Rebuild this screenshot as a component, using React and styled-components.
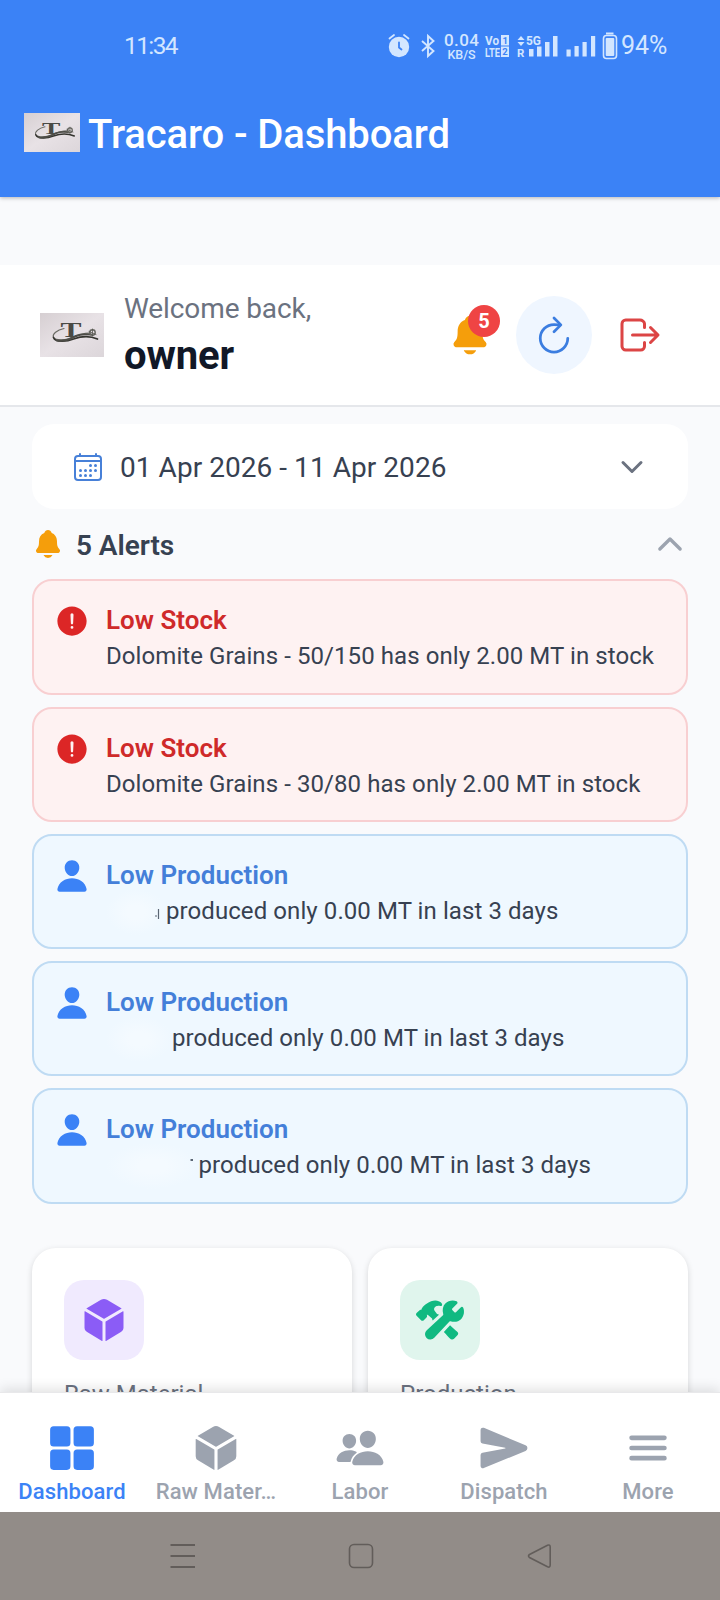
import React from "react";
import styled, { createGlobalStyle } from "styled-components";
import {
  IoAlertCircle,
  IoCalendarOutline,
  IoChevronDown,
  IoChevronUp,
  IoConstruct,
  IoCube,
  IoGrid,
  IoLogOutOutline,
  IoMenu,
  IoNotifications,
  IoPeople,
  IoPerson,
  IoRefreshOutline,
  IoSend,
} from "react-icons/io5";

const GlobalStyle = createGlobalStyle`
  * {
    box-sizing: border-box;
  }

  body {
    margin: 0;
    background: #f9fafb;
    font-family: Roboto, "Liberation Sans", sans-serif;
  }

  svg {
    display: block;
    flex-shrink: 0;
    overflow: visible;
  }
`;

const Screen = styled.div`
  width: 720px;
  height: 1600px;
  display: flex;
  flex-direction: column;
  overflow: hidden;
  background: #f9fafc;
`;

const TopBar = styled.header`
  position: relative;
  z-index: 1;
  height: 197px;
  flex-shrink: 0;
  background: #3b82f6;
  box-shadow: 0 1px 4px rgba(0, 0, 0, 0.28);
`;

const StatusBar = styled.div`
  height: 91px;
  padding: 0 51px 0 124px;
  display: flex;
  align-items: center;
  color: #d3e6ff;
`;

const Clock = styled.span`
  flex: 1;
  font-size: 24.5px;
  letter-spacing: -1.6px;
`;

const StatusItem = styled.div`
  width: ${(p) => p.$width}px;
  margin-left: ${(p) => p.$gap}px;
`;

const Battery = styled.span`
  width: 48px;
  margin-left: 3px;
  font-size: 25px;
`;

const TitleRow = styled.div`
  height: 82px;
  padding-left: 24px;
  display: flex;
  align-items: center;
  gap: 8px;
`;

const Title = styled.h1`
  margin: 0;
  padding-top: 5px;
  font-size: 40px;
  font-weight: 500;
  line-height: 48px;
  letter-spacing: -0.1px;
  color: #fff;
`;

const Content = styled.main`
  flex: 1;
  min-height: 0;
  overflow: hidden;
  padding-top: 68px;
`;

const Welcome = styled.section`
  height: 142px;
  padding: 0 56px 0 40px;
  display: flex;
  align-items: center;
  background: #fff;
  border-bottom: 2px solid #e5e7eb;
`;

const Greeting = styled.div`
  flex: 1;
  margin-left: 20px;
  padding-top: 4px;
`;

const Hello = styled.div`
  font-size: 28px;
  line-height: 38px;
  letter-spacing: -0.1px;
  color: #6b7280;
`;

const UserName = styled.div`
  font-size: 40px;
  font-weight: 700;
  line-height: 56px;
  letter-spacing: -0.1px;
  color: #111827;
`;

const Actions = styled.div`
  display: flex;
  align-items: center;
  color: #f59e0b;
`;

const BellButton = styled.div`
  position: relative;
  margin-right: 24px;
`;

const Badge = styled.span`
  position: absolute;
  top: -8px;
  right: -8px;
  width: 32px;
  height: 32px;
  border-radius: 50%;
  background: #ef4444;
  color: #fff;
  font-size: 20px;
  font-weight: 700;
  line-height: 33px;
  text-align: center;
`;

const RefreshButton = styled.div`
  width: 76px;
  height: 78px;
  margin-right: 24px;
  border-radius: 50%;
  display: flex;
  align-items: center;
  justify-content: center;
  background: #eff6ff;
  color: #3b7de0;
`;

const LogoutButton = styled.div`
  color: #dc4545;
`;

const DatePicker = styled.section`
  height: 85px;
  margin: 17px 32px 0;
  padding: 0 40px;
  display: flex;
  align-items: center;
  border-radius: 22px;
  background: #fff;
  color: #4780d8;
`;

const DateRange = styled.span`
  flex: 1;
  margin-left: 16px;
  padding-top: 2px;
  font-size: 28px;
  letter-spacing: 0.05px;
  color: #374151;
`;

const Chevron = styled.span`
  color: ${(p) => p.$color};
`;

const AlertsHeader = styled.div`
  height: 70.3px;
  padding: 0 32px;
  display: flex;
  align-items: center;
  color: #f59e0b;
`;

const AlertsTitle = styled.h2`
  flex: 1;
  margin: 0 0 0 12px;
  padding-top: 2px;
  font-size: 28px;
  font-weight: 600;
  letter-spacing: -0.05px;
  color: #374151;
`;

const AlertList = styled.div`
  padding: 0 32px;
  display: flex;
  flex-direction: column;
  gap: 12px;
`;

const AlertCard = styled.article`
  height: 115.3px;
  padding: 22px 20px;
  display: flex;
  gap: 16px;
  border: 2px solid ${(p) => (p.$danger ? "#f8cfd1" : "#bfdbf3")};
  border-radius: 20px;
  background: ${(p) => (p.$danger ? "#fef2f2" : "#eff8ff")};
  color: ${(p) => (p.$danger ? "#dc2626" : "#3b82f6")};
`;

const AlertTitle = styled.div`
  font-size: 26px;
  font-weight: 600;
  line-height: 35px;
  color: ${(p) => (p.$danger ? "#cf2a2a" : "#447fd9")};
`;

const AlertText = styled.div`
  display: flex;
  font-size: 24px;
  line-height: 36px;
  letter-spacing: 0.08px;
  white-space: nowrap;
  color: #374151;
`;

const HiddenName = styled.span`
  width: ${(p) => p.$width}px;
  height: 46px;
  margin: -4px 0 -6px;
  background: radial-gradient(closest-side, #f4faff 30%, #eff8ff);
`;

const StatGrid = styled.div`
  padding: 44px 32px 0;
  display: grid;
  grid-template-columns: 1fr 1fr;
  gap: 16px;
`;

const StatCard = styled.div`
  height: 260px;
  padding: 32px;
  border-radius: 24px;
  background: #fff;
  box-shadow: 0 2px 6px rgba(0, 0, 0, 0.15);
`;

const StatIcon = styled.div`
  width: 80px;
  height: 80px;
  border-radius: 20px;
  display: flex;
  align-items: center;
  justify-content: center;
  background: ${(p) => p.$bg};
  color: ${(p) => p.$color};
`;

const StatLabel = styled.div`
  margin-top: 17px;
  font-size: 24px;
  line-height: 34px;
  color: #6b7280;
`;

const TabBar = styled.nav`
  position: relative;
  z-index: 1;
  height: 120px;
  padding-top: 30px;
  flex-shrink: 0;
  display: grid;
  grid-template-columns: repeat(5, 1fr);
  background: #fff;
  border-top: 1px solid #e8e8ea;
  box-shadow: 0 -3px 12px rgba(0, 0, 0, 0.12);
`;

const Tab = styled.div`
  display: flex;
  flex-direction: column;
  align-items: center;
  gap: 6px;
  font-size: 22px;
  font-weight: 500;
  line-height: 26px;
  letter-spacing: 0.1px;
  color: ${(p) => (p.$active ? "#3b82f6" : "#9ca3af")};
`;

const SystemNav = styled.footer`
  position: relative;
  z-index: 1;
  height: 88px;
  padding: 0 168px 0 170px;
  flex-shrink: 0;
  display: flex;
  align-items: center;
  justify-content: space-between;
  background: #928c88;
`;

const Logo = ({ width, height }) => (
  <svg width={width} height={height} viewBox="0 0 64 44" preserveAspectRatio="none">
    <defs>
      <linearGradient id="paper" x1="0" y1="0" x2="1" y2="1">
        <stop offset="0" stopColor="#d6cfd2" />
        <stop offset="0.5" stopColor="#e8e2e6" />
        <stop offset="1" stopColor="#dcd6da" />
      </linearGradient>
    </defs>
    <rect width="64" height="44" fill="url(#paper)" />
    <g fill="none" strokeLinecap="round">
      <path d="M24 15.500C17 17 12 21 13.500 24.500c2 3 12 3 19 0 6-3 10-4.500 17-4.500" stroke="#6a6a64" strokeWidth="1.2" />
      <path d="M13.500 24.500c2 5.500 14 4 20 1.500 8-3 15-4 24 0" stroke="#34342f" strokeWidth="1.7" />
      <path d="M17 27.500c8 1 13-1.500 19-4.500 5-2.500 10-2 15-1.500" stroke="#4d4d47" strokeWidth="2" />
      <circle cx="52.500" cy="19.500" r="2.700" stroke="#65655f" strokeWidth="1.4" />
      <path d="M49 18.500l7 3M52.500 16v7" stroke="#55554f" strokeWidth="0.8" />
    </g>
    <text
      x="31"
      y="24"
      textAnchor="middle"
      textLength="21"
      lengthAdjust="spacingAndGlyphs"
      fontFamily="Liberation Serif, serif"
      fontWeight="700"
      fontSize="20"
      fill="#4a4a45"
    >
      T
    </text>
  </svg>
);

const statusFont = { fontFamily: "Roboto, sans-serif", fontWeight: 500 };

const AlarmIcon = () => (
  <svg width="22" height="26" viewBox="0 0 22 26" fill="none" stroke="currentColor" strokeLinecap="round">
    <circle cx="11" cy="14" r="10.2" fill="currentColor" stroke="none" />
    <path d="M1.5 5.5L6 2M20.5 5.5L16 2" strokeWidth="1.8" />
    <path d="M11 9.500v5l2.500 2" stroke="#3b82f6" strokeWidth="1.8" />
  </svg>
);

const BluetoothIcon = () => (
  <svg width="14" height="24" viewBox="0 0 14 24" fill="none" stroke="currentColor" strokeWidth="1.9">
    <path d="M1 7l11.500 10L7 22V2l5.500 5L1 17" />
  </svg>
);

const SpeedIcon = () => (
  <svg width="35" height="28" viewBox="0 0 35 28" fill="currentColor" style={statusFont}>
    <text x="0" y="14" fontSize="17" textLength="35">0.04</text>
    <text x="3.500" y="26.500" fontSize="12.500" textLength="28">KB/S</text>
  </svg>
);

const VolteIcon = () => (
  <svg width="24" height="24" viewBox="0 0 24 24" fill="currentColor" fontWeight="700">
    <text x="0" y="11" fontSize="13" textLength="14" lengthAdjust="spacingAndGlyphs">Vo</text>
    <text x="0" y="22.500" fontSize="13" textLength="15" lengthAdjust="spacingAndGlyphs">LTE</text>
    <rect x="16" y="1" width="8" height="10.500" />
    <rect x="16" y="12.500" width="8" height="10.500" />
    <g fill="#3b82f6" fontSize="9.500">
      <text x="17.500" y="9.800">1</text>
      <text x="17.200" y="21.400">2</text>
    </g>
  </svg>
);

const FiveGIcon = () => (
  <svg width="41" height="24" viewBox="0 0 41 24" fill="currentColor" fontWeight="700">
    <path d="M0.500 6L4 2l3.500 4zM0.500 8L4 12l3.500-4z" />
    <text x="0" y="23" fontSize="11.500">R</text>
    <text x="9" y="10.500" fontSize="13" textLength="15" lengthAdjust="spacingAndGlyphs">5G</text>
    <rect x="12" y="15" width="4.500" height="7.500" />
    <rect x="20" y="12.500" width="4.500" height="10" />
    <rect x="28" y="8" width="4.500" height="14.500" />
    <rect x="36" y="2" width="4.500" height="20.500" />
  </svg>
);

const SignalIcon = () => (
  <svg width="30" height="24" viewBox="0 0 30 24" fill="currentColor">
    <rect x="0.500" y="15.500" width="4.200" height="7" />
    <rect x="8.500" y="12" width="4.200" height="10.500" />
    <rect x="16.500" y="8" width="4.200" height="14.500" />
    <rect x="25" y="2" width="4.200" height="20.500" />
  </svg>
);

const BatteryIcon = () => (
  <svg width="16" height="28" viewBox="0 0 16 28" fill="currentColor">
    <rect x="4" y="0.500" width="7.500" height="2" />
    <rect x="1.500" y="3.500" width="13" height="23" rx="3" fill="none" stroke="currentColor" strokeWidth="1.600" />
    <rect x="3.700" y="6" width="8.600" height="18" rx="1" />
  </svg>
);

// leftover specks beside the masked names
const Speck = ({ kind }) => (
  <svg width="100%" height="46" viewBox="0 0 60 46" preserveAspectRatio="xMaxYMin meet">
    {kind === "stroke" && <path d="M52.500 20v10M49 27h2" stroke="#5b6674" strokeWidth="1.200" />}
    {kind === "dot" && <rect x="52" y="16" width="2.500" height="2" fill="#5b6674" />}
  </svg>
);

const alerts = [
  { danger: true, title: "Low Stock", text: "Dolomite Grains - 50/150 has only 2.00 MT in stock" },
  { danger: true, title: "Low Stock", text: "Dolomite Grains - 30/80 has only 2.00 MT in stock" },
  { title: "Low Production", text: "produced only 0.00 MT in last 3 days", nameWidth: 60, speck: "stroke" },
  { title: "Low Production", text: "produced only 0.00 MT in last 3 days", nameWidth: 66 },
  { title: "Low Production", text: "produced only 0.00 MT in last 3 days", nameWidth: 92.5, speck: "dot" },
];

const stats = [
  { label: "Raw Material", icon: IoCube, color: "#8b5cf6", bg: "#f0eafe" },
  { label: "Production", icon: IoConstruct, color: "#10b981", bg: "#e0f5ed" },
];

const tabs = [
  { label: "Dashboard", icon: IoGrid, active: true },
  { label: "Raw Mater…", icon: IoCube },
  { label: "Labor", icon: IoPeople },
  { label: "Dispatch", icon: IoSend },
  { label: "More", icon: IoMenu },
];

const App = () => {
  return (
    <Screen>
      <GlobalStyle />
      <TopBar>
        <StatusBar>
          <Clock>11:34</Clock>
          <StatusItem $width={22} $gap={0}><AlarmIcon /></StatusItem>
          <StatusItem $width={14} $gap={11}><BluetoothIcon /></StatusItem>
          <StatusItem $width={35} $gap={9}><SpeedIcon /></StatusItem>
          <StatusItem $width={24} $gap={6}><VolteIcon /></StatusItem>
          <StatusItem $width={41} $gap={8}><FiveGIcon /></StatusItem>
          <StatusItem $width={30} $gap={8}><SignalIcon /></StatusItem>
          <StatusItem $width={16} $gap={6}><BatteryIcon /></StatusItem>
          <Battery>94%</Battery>
        </StatusBar>
        <TitleRow>
          <Logo width={56} height={39} />
          <Title>Tracaro - Dashboard</Title>
        </TitleRow>
      </TopBar>

      <Content>
        <Welcome>
          <Logo width={64} height={44} />
          <Greeting>
            <Hello>Welcome back,</Hello>
            <UserName>owner</UserName>
          </Greeting>
          <Actions>
            <BellButton>
              <IoNotifications size={44} />
              <Badge>5</Badge>
            </BellButton>
            <RefreshButton>
              <IoRefreshOutline size={44} />
            </RefreshButton>
            <LogoutButton>
              <IoLogOutOutline size={48} />
            </LogoutButton>
          </Actions>
        </Welcome>

        <DatePicker>
          <IoCalendarOutline size={32} />
          <DateRange>01 Apr 2026 - 11 Apr 2026</DateRange>
          <Chevron $color="#6b7280">
            <IoChevronDown size={32} />
          </Chevron>
        </DatePicker>

        <AlertsHeader>
          <IoNotifications size={32} />
          <AlertsTitle>5 Alerts</AlertsTitle>
          <Chevron $color="#9ca3af">
            <IoChevronUp size={36} />
          </Chevron>
        </AlertsHeader>

        <AlertList>
          {alerts.map((item, index) => (
            <AlertCard key={index} $danger={item.danger}>
              {item.danger ? <IoAlertCircle size={36} /> : <IoPerson size={36} />}
              <div>
                <AlertTitle $danger={item.danger}>{item.title}</AlertTitle>
                <AlertText>
                  {item.nameWidth && (
                    <HiddenName $width={item.nameWidth}>
                      <Speck kind={item.speck} />
                    </HiddenName>
                  )}
                  {item.text}
                </AlertText>
              </div>
            </AlertCard>
          ))}
        </AlertList>

        <StatGrid>
          {stats.map(({ label, icon: Icon, color, bg }) => (
            <StatCard key={label}>
              <StatIcon $color={color} $bg={bg}>
                <Icon size={48} />
              </StatIcon>
              <StatLabel>{label}</StatLabel>
            </StatCard>
          ))}
        </StatGrid>
      </Content>

      <TabBar>
        {tabs.map(({ label, icon: Icon, active }) => (
          <Tab key={label} $active={active}>
            <Icon size={50} />
            {label}
          </Tab>
        ))}
      </TabBar>

      <SystemNav>
        <svg width="26" height="26" viewBox="0 0 26 26" fill="none" stroke="#625d5a" strokeWidth="1.800">
          <path d="M0.500 2h24.500M0.500 13h24.500M0.500 24h24.500" />
        </svg>
        <svg width="26" height="26" viewBox="0 0 26 26" fill="none" stroke="#625d5a" strokeWidth="1.600">
          <rect x="1.500" y="1.500" width="23" height="23" rx="4.500" />
        </svg>
        <svg width="26" height="26" viewBox="0 0 26 26" fill="none" stroke="#625d5a" strokeWidth="1.600">
          <path d="M3.500 11.500L21.500 2.200Q24.200 1.200 24.200 4v18Q24.200 25 21.500 23.800L3.500 14.500Q1.500 13 3.500 11.500z" />
        </svg>
      </SystemNav>
    </Screen>
  );
};

export default App;
